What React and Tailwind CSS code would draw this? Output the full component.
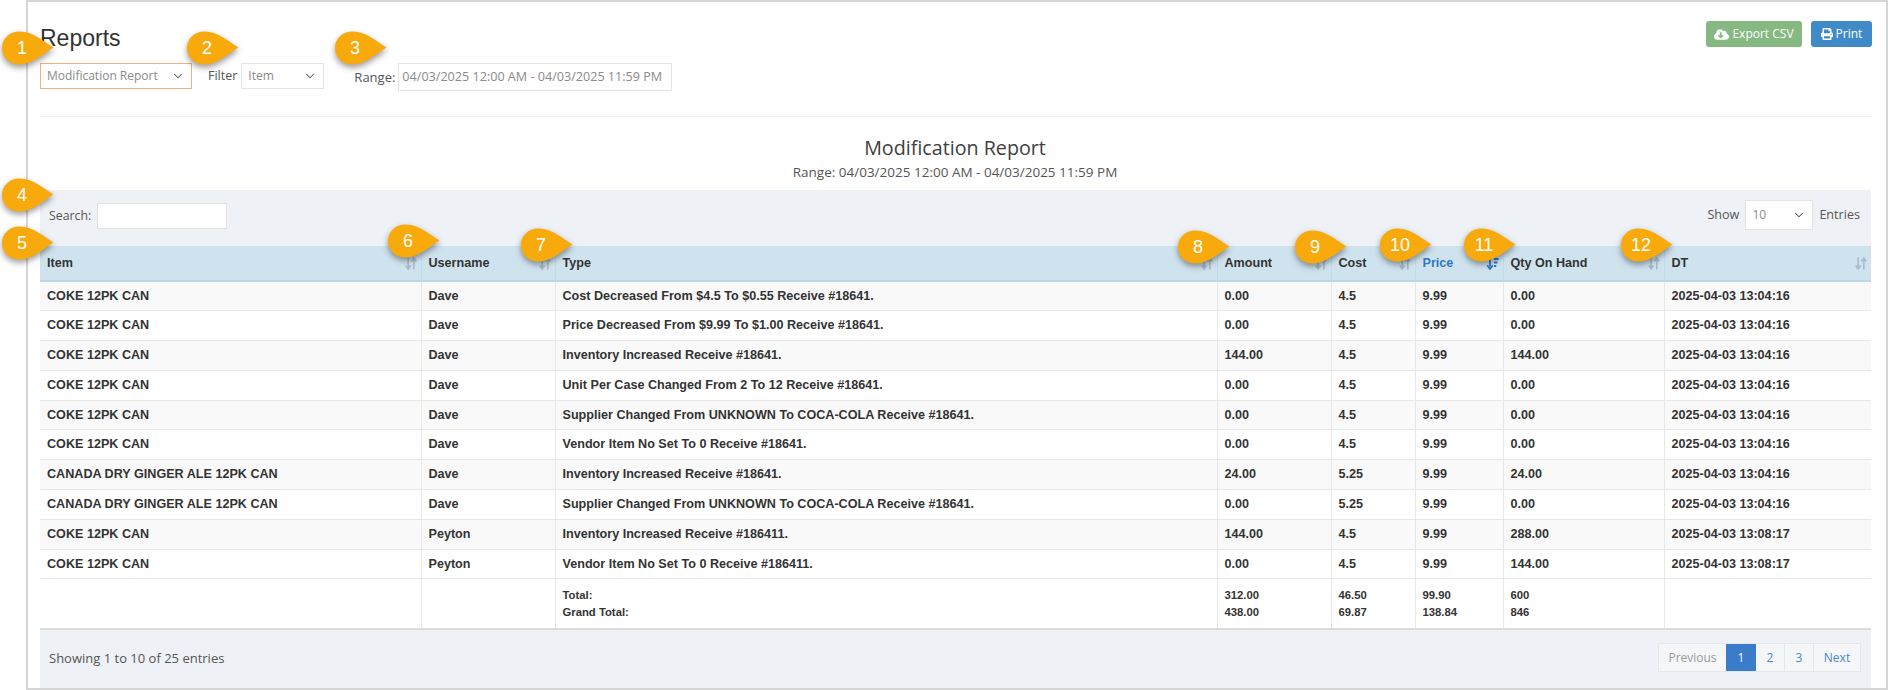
import React from 'react';
import { ChevronDown } from 'lucide-react';
import { FaCloudDownloadAlt, FaPrint } from 'react-icons/fa';

const columns = [
  { label: 'Item', width: 381 },
  { label: 'Username', width: 134 },
  { label: 'Type', width: 662 },
  { label: 'Amount', width: 114 },
  { label: 'Cost', width: 84 },
  { label: 'Price', width: 88, active: true },
  { label: 'Qty On Hand', width: 161 },
  { label: 'DT', width: 207 },
];

const rows = [
  ['COKE 12PK CAN', 'Dave', 'Cost Decreased From $4.5 To $0.55 Receive #18641.', '0.00', '4.5', '9.99', '0.00', '2025-04-03 13:04:16'],
  ['COKE 12PK CAN', 'Dave', 'Price Decreased From $9.99 To $1.00 Receive #18641.', '0.00', '4.5', '9.99', '0.00', '2025-04-03 13:04:16'],
  ['COKE 12PK CAN', 'Dave', 'Inventory Increased Receive #18641.', '144.00', '4.5', '9.99', '144.00', '2025-04-03 13:04:16'],
  ['COKE 12PK CAN', 'Dave', 'Unit Per Case Changed From 2 To 12 Receive #18641.', '0.00', '4.5', '9.99', '0.00', '2025-04-03 13:04:16'],
  ['COKE 12PK CAN', 'Dave', 'Supplier Changed From UNKNOWN To COCA-COLA Receive #18641.', '0.00', '4.5', '9.99', '0.00', '2025-04-03 13:04:16'],
  ['COKE 12PK CAN', 'Dave', 'Vendor Item No Set To 0 Receive #18641.', '0.00', '4.5', '9.99', '0.00', '2025-04-03 13:04:16'],
  ['CANADA DRY GINGER ALE 12PK CAN', 'Dave', 'Inventory Increased Receive #18641.', '24.00', '5.25', '9.99', '24.00', '2025-04-03 13:04:16'],
  ['CANADA DRY GINGER ALE 12PK CAN', 'Dave', 'Supplier Changed From UNKNOWN To COCA-COLA Receive #18641.', '0.00', '5.25', '9.99', '0.00', '2025-04-03 13:04:16'],
  ['COKE 12PK CAN', 'Peyton', 'Inventory Increased Receive #186411.', '144.00', '4.5', '9.99', '288.00', '2025-04-03 13:08:17'],
  ['COKE 12PK CAN', 'Peyton', 'Vendor Item No Set To 0 Receive #186411.', '0.00', '4.5', '9.99', '144.00', '2025-04-03 13:08:17'],
];

const totals = [
  ['', ''],
  ['', ''],
  ['Total:', 'Grand Total:'],
  ['312.00', '438.00'],
  ['46.50', '69.87'],
  ['99.90', '138.84'],
  ['600', '846'],
  ['', ''],
];

const callouts = [
  { n: 1, left: 1, top: 31 },
  { n: 2, left: 186, top: 31 },
  { n: 3, left: 334, top: 31 },
  { n: 4, left: 1, top: 178 },
  { n: 5, left: 1, top: 226 },
  { n: 6, left: 387, top: 224 },
  { n: 7, left: 520, top: 228 },
  { n: 8, left: 1177, top: 230 },
  { n: 9, left: 1294, top: 230 },
  { n: 10, left: 1379, top: 228 },
  { n: 11, left: 1463, top: 228 },
  { n: 12, left: 1620, top: 228 },
];

const SortIcon = ({ active }) => {
  if (active) {
    return (
      <svg width="13" height="13" viewBox="0 0 13 13" className="text-[#2f78c4]">
        <path d="M4 0.5v9M1.2 8.2 4 12l2.8-3.8" fill="none" stroke="currentColor" strokeWidth="1.8" />
        <path d="M8 1h4.6v2H8zM8 4.5h3.4v2H8zM8 8h2.2v2H8z" fill="currentColor" />
      </svg>
    );
  }
  return (
    <svg width="12" height="13" viewBox="0 0 12 13" className="text-[#a9bcc8]">
      <path d="M3.2 0.5v10M0.8 8.6 3.2 12l2.4-3.4" fill="none" stroke="currentColor" strokeWidth="1.7" />
      <path d="M8.8 12.5v-10M6.4 4.4 8.8 1l2.4 3.4" fill="none" stroke="currentColor" strokeWidth="1.7" />
    </svg>
  );
};

const Callout = ({ n, left, top }) => (
  <div className="absolute w-[54px] h-[38px]" style={{ left, top }}>
    <svg width="54" height="38" viewBox="0 0 54 38" className="absolute left-0 top-0 drop-shadow-[0px_3px_3px_rgba(0,0,0,0.4)]">
      <path d="M19 0.5C31 0.5 42 10 52.5 16.5C42 23 31 33.5 19 33.5C8 33.5 1 26 1 17C1 8 8 0.5 19 0.5Z" fill="#f8aa0d" />
    </svg>
    <span className="absolute left-0 top-0 w-[42px] h-[34px] flex items-center justify-center text-white text-[18px] font-['Liberation_Sans',sans-serif]">
      {n}
    </span>
  </div>
);

const FakeSelect = ({ className, value }) => (
  <div className={`flex items-center justify-between bg-white border text-[#8a8a8a] pl-[6px] pr-[6px] ${className}`}>
    <span>{value}</span>
    <ChevronDown size={14} strokeWidth={1.8} className="text-[#555]" />
  </div>
);

export default function App() {
  return (
    <div className="relative w-[1888px] h-[690px] bg-white overflow-hidden pl-[26px] font-['Open_Sans',sans-serif]">
      <div className="h-[690px] border-2 border-[#d6d6d6] pl-[12px] pr-[14px]">
        {/* Top bar */}
        <div className="flex justify-between h-[115px] border-b border-[#f0f0f0]">
          <div>
            <h1 className="text-[23px] leading-[26px] mt-[23px] text-[#333] font-['Liberation_Sans',sans-serif]">Reports</h1>
            <div className="flex items-start mt-[12px] text-[12px] text-[#555]">
              <FakeSelect className="w-[152px] h-[26px] border-[#f5b27c]" value="Modification Report" />
              <span className="ml-[16px] leading-[26px] text-[12.5px]">Filter</span>
              <FakeSelect className="ml-[4px] w-[83px] h-[26px] border-[#e3e3e3]" value="Item" />
              <span className="ml-[30px] leading-[28px] text-[13px]">Range:</span>
              <div className="ml-[3px] w-[274px] h-[28px] leading-[26px] bg-white border border-[#e3e3e3] pl-[3px] text-[12.6px] text-[#8a8a8a] whitespace-nowrap">
                04/03/2025 12:00 AM - 04/03/2025 11:59 PM
              </div>
            </div>
          </div>
          <div className="flex gap-[9px] mt-[19px] text-[12px] text-white">
            <button className="flex items-center justify-center gap-[3px] w-[96px] h-[26px] rounded-[3px] bg-[#85b981]">
              <FaCloudDownloadAlt size={15} />
              Export CSV
            </button>
            <button className="flex items-center justify-center gap-[3px] w-[61px] h-[26px] rounded-[3px] bg-[#418aca]">
              <FaPrint size={12} />
              Print
            </button>
          </div>
        </div>

        {/* Report heading */}
        <div className="h-[73px] pr-[2px] text-center">
          <h2 className="pt-[18px] text-[19.7px] leading-[26px] text-[#404040]">Modification Report</h2>
          <p className="mt-[2px] text-[13.5px] leading-[18px] text-[#555]">Range: 04/03/2025 12:00 AM - 04/03/2025 11:59 PM</p>
        </div>

        {/* Table panel */}
        <div className="w-[1831px] h-[498px] bg-[#eef1f6] text-[12px] text-[#555]">
          <div className="flex items-center justify-between h-[56px] pl-[9px] pr-[11px]">
            <div className="flex items-center gap-[6px] -mt-[4px]">
              <span className="text-[12.3px]">Search:</span>
              <div className="w-[130px] h-[26px] bg-white border border-[#e3e3e3]" />
            </div>
            <div className="flex items-center gap-[6px] -mt-[6px] text-[12.6px]">
              <span>Show</span>
              <FakeSelect className="w-[68px] h-[30px] border-[#e3e3e3] text-[12px]" value="10" />
              <span>Entries</span>
            </div>
          </div>

          <table className="w-[1831px] table-fixed border-collapse bg-white font-['Liberation_Sans',sans-serif] text-[#333]">
            <colgroup>
              {columns.map((col) => (
                <col key={col.label} style={{ width: col.width }} />
              ))}
            </colgroup>
            <thead>
              <tr className="h-[35px] bg-[#cfe3ef] border-b-2 border-[#b9d7ea]">
                {columns.map((col) => (
                  <th key={col.label} className="relative px-[7px] text-left text-[12.6px] font-bold border-l border-[#c0dbea] first:border-l-0">
                    <span className={col.active ? 'text-[#2f78c4]' : ''}>{col.label}</span>
                    <span className="absolute right-[4px] top-[11px]">
                      <SortIcon active={col.active} />
                    </span>
                  </th>
                ))}
              </tr>
            </thead>
            <tbody>
              {rows.map((row, i) => (
                <tr key={i} className={`h-[29.8px] border-b border-[#e8e8e8] ${i % 2 === 0 ? 'bg-[#f9f9f9]' : 'bg-white'}`}>
                  {row.map((cell, j) => (
                    <td key={j} className="px-[7px] text-[12.6px] font-bold whitespace-nowrap border-l border-[#e8e8e8] first:border-l-0">
                      {cell}
                    </td>
                  ))}
                </tr>
              ))}
              <tr className="h-[50px] border-b-2 border-[#dcdcdc]">
                {totals.map((cell, j) => (
                  <td key={j} className="px-[7px] text-[11.3px] leading-[17px] font-bold border-l border-[#e8e8e8] first:border-l-0">
                    <div>{cell[0]}</div>
                    <div>{cell[1]}</div>
                  </td>
                ))}
              </tr>
            </tbody>
          </table>

          <div className="flex items-center justify-between h-[59px] pl-[9px] pr-[10px]">
            <span className="-mt-[1px] text-[13px]">Showing 1 to 10 of 25 entries</span>
            <div className="flex h-[29px] -mt-[3px] border border-[#e3e6ea] bg-[#f4f6f8] leading-[27px] text-center text-[#4a86d0]">
              <span className="w-[67px] text-[#9a9a9a]">Previous</span>
              <span className="w-[30px] bg-[#3a7cc9] text-white">1</span>
              <span className="w-[29px] border-r border-[#e3e6ea]">2</span>
              <span className="w-[29px] border-r border-[#e3e6ea]">3</span>
              <span className="w-[46px]">Next</span>
            </div>
          </div>
        </div>
      </div>

      {callouts.map((c) => (
        <Callout key={c.n} {...c} />
      ))}
    </div>
  );
}
